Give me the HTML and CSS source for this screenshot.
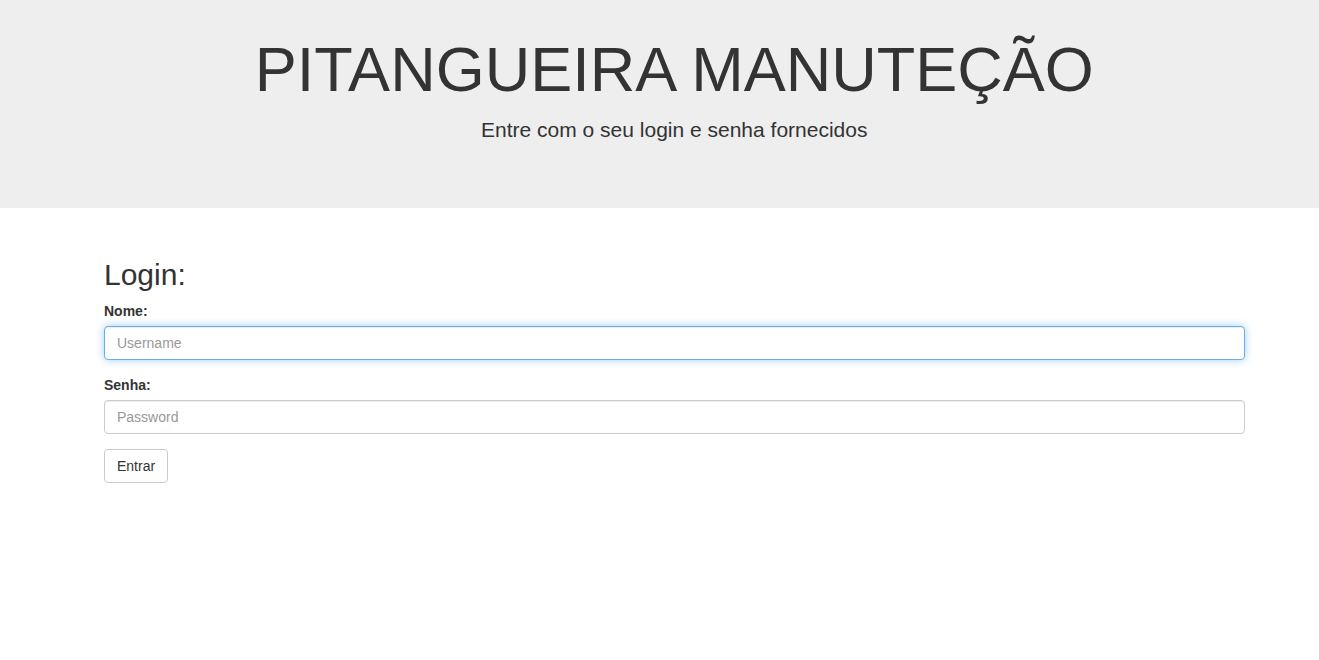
FILE: index.html
```html
<!DOCTYPE html>
<html lang="pt">
<head>
<meta charset="utf-8">
<title>Pitangueira Manutenção</title>
<link rel="stylesheet" href="styles.css">
</head>
<body>
<div class="jumbotron">
  <div class="container">
    <h1 class="title">PITANGUEIRA MANUTEÇÃO</h1>
    <p class="lead">Entre com o seu login e senha fornecidos</p>
  </div>
</div>
<div class="container main">
  <h2 class="heading">Login:</h2>
  <form class="form">
    <div class="form-group">
      <label class="label" for="user">Nome:</label>
      <input class="input focused" id="user" type="text" placeholder="Username">
    </div>
    <div class="form-group">
      <label class="label" for="pass">Senha:</label>
      <input class="input" id="pass" type="password" placeholder="Password">
    </div>
    <button class="btn" type="button">Entrar</button>
  </form>
</div>
</body>
</html>
```
FILE: styles.css
```css
* { box-sizing: border-box; }
html, body { margin: 0; padding: 0; }
body {
  font-family: "Liberation Sans", Arial, Helvetica, sans-serif;
  font-size: 14px;
  line-height: 20px;
  color: #333;
  background: #fff;
}
.container {
  width: 1170px;
  margin: 0 auto;
  padding-left: 29.5px;
}
.jumbotron {
  background: #eee;
  height: 208px;
  padding-top: 35px;
}
.main {
  padding-top: 30px;
}
.title {
  margin: 0 0 11px;
  font-size: 63px;
  line-height: 69px;
  font-weight: 500;
  text-align: center;
}
.lead {
  margin: 0;
  font-size: 21px;
  line-height: 30px;
  text-align: center;
}
.heading {
  margin: 20px 0 10px;
  font-size: 30px;
  line-height: 33px;
  font-weight: 500;
}
.form { margin: 0; }
.form-group { margin-bottom: 15px; }
.label {
  display: block;
  font-weight: bold;
  margin-bottom: 5px;
}
.input {
  display: block;
  width: 100%;
  height: 34px;
  padding: 6px 12px;
  font-family: inherit;
  font-size: 14px;
  line-height: 20px;
  color: #555;
  background: #fff;
  border: 1px solid #ccc;
  border-radius: 4px;
  box-shadow: inset 0 1px 1px rgba(0,0,0,.075);
  outline: none;
}
.input::placeholder { color: #999; }
.input.focused {
  border-color: #66afe9;
  box-shadow: inset 0 1px 1px rgba(0,0,0,.075), 0 0 8px rgba(102,175,233,.6);
}
.btn {
  display: inline-block;
  height: 34px;
  padding: 6px 12px;
  font-family: inherit;
  font-size: 14px;
  line-height: 20px;
  color: #333;
  background: #fff;
  border: 1px solid #ccc;
  border-radius: 4px;
  cursor: pointer;
}
```
